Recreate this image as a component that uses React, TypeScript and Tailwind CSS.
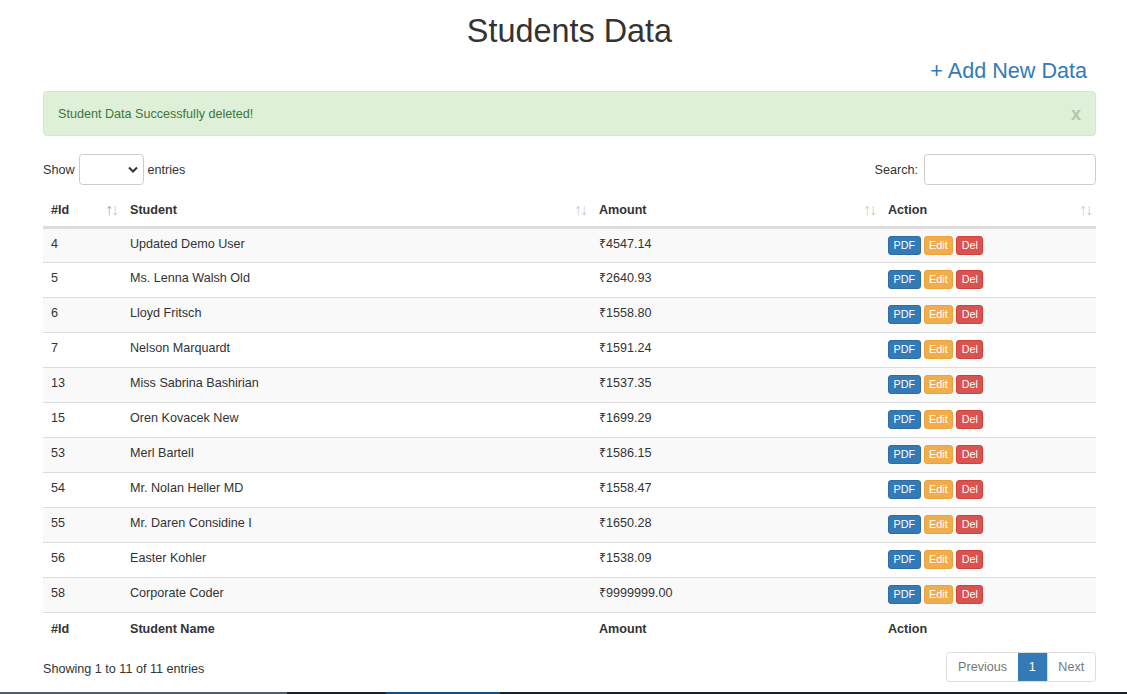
import React from 'react'

const students = [
  { id: 4, name: 'Updated Demo User', amount: '₹4547.14' },
  { id: 5, name: 'Ms. Lenna Walsh Old', amount: '₹2640.93' },
  { id: 6, name: 'Lloyd Fritsch', amount: '₹1558.80' },
  { id: 7, name: 'Nelson Marquardt', amount: '₹1591.24' },
  { id: 13, name: 'Miss Sabrina Bashirian', amount: '₹1537.35' },
  { id: 15, name: 'Oren Kovacek New', amount: '₹1699.29' },
  { id: 53, name: 'Merl Bartell', amount: '₹1586.15' },
  { id: 54, name: 'Mr. Nolan Heller MD', amount: '₹1558.47' },
  { id: 55, name: 'Mr. Daren Considine I', amount: '₹1650.28' },
  { id: 56, name: 'Easter Kohler', amount: '₹1538.09' },
  { id: 58, name: 'Corporate Coder', amount: '₹9999999.00' },
]

const SortArrows: React.FC<{ active?: boolean }> = ({ active }) => (
  <span className="flex text-[16px] leading-none font-normal tracking-[-2px]">
    <span className={active ? 'text-[#9ca3d8]' : 'text-[#cccccc]'}>↑</span>
    <span className="text-[#cccccc]">↓</span>
  </span>
)

const HeadCell: React.FC<{ label: string; active?: boolean }> = ({ label, active }) => (
  <th className="border-b-[3px] border-[#ddd] py-[7px] pl-2 pr-[5px] text-left font-bold">
    <div className="flex items-center justify-between">
      <span>{label}</span>
      <SortArrows active={active} />
    </div>
  </th>
)

const App: React.FC = () => {
  return (
    <div className="flex min-h-screen flex-col bg-white font-['Liberation_Sans',Arial,sans-serif] text-[12.6px] leading-[18px] text-[#333]">
      <div className="pr-[31px] pl-[43px]">
        <h1 className="mt-[14px] text-center text-[32.4px] leading-[1.1] font-normal">Students Data</h1>
        <div className="mt-[9px] flex justify-end pr-[9px]">
          <a href="#" className="text-[21.6px] leading-[1.1] text-[#337ab7]">+ Add New Data</a>
        </div>

        <div className="mt-[9px] flex items-center justify-between rounded-[3.6px] border border-[#d6e9c6] bg-[#dff0d8] py-[12.5px] pr-[14px] pl-[14px] text-[#3c763d]">
          <span>Student Data Successfully deleted!</span>
          <span className="text-[18px] leading-[18px] font-bold text-[#b5c6ae]">x</span>
        </div>

        <div className="mt-[18px] flex items-center justify-between">
          <div className="flex items-center gap-[4px]">
            <span>Show</span>
            <div className="flex h-[31px] w-[65px] items-center justify-end rounded-[3.6px] border border-[#ccc] pr-[5px]">
              <svg width="10" height="7" viewBox="0 0 10 7" fill="none">
                <polyline points="1,1.5 5,5.5 9,1.5" stroke="#333" strokeWidth="2" />
              </svg>
            </div>
            <span>entries</span>
          </div>
          <div className="flex items-center gap-[6px]">
            <span>Search:</span>
            <div className="h-[31px] w-[172px] rounded-[3.6px] border border-[#ccc]" />
          </div>
        </div>

        <table className="mt-[9px] w-full table-fixed border-collapse">
          <colgroup>
            <col className="w-[79px]" />
            <col className="w-[469px]" />
            <col className="w-[289px]" />
            <col className="w-[216px]" />
          </colgroup>
          <thead>
            <tr>
              <HeadCell label="#Id" active />
              <HeadCell label="Student" />
              <HeadCell label="Amount" />
              <HeadCell label="Action" />
            </tr>
          </thead>
          <tbody>
            {students.map((s, i) => (
              <tr key={s.id} className={i % 2 === 0 ? 'bg-[#f9f9f9]' : 'bg-white'}>
                <td className="h-[35px] border-t border-[#ddd] px-2 pt-[6px] align-top">{s.id}</td>
                <td className="border-t border-[#ddd] px-2 pt-[6px] align-top">{s.name}</td>
                <td className="border-t border-[#ddd] px-2 pt-[6px] align-top">{s.amount}</td>
                <td className="border-t border-[#ddd] px-2 pt-[7px] align-top">
                  <div className="flex gap-[3px]">
                    <button className="h-[19px] rounded-[3px] border border-[#2e6da4] bg-[#337ab7] px-[4.5px] text-[10.8px] leading-[17px] text-white">PDF</button>
                    <button className="h-[19px] rounded-[3px] border border-[#eea236] bg-[#f0ad4e] px-[4.5px] text-[10.8px] leading-[17px] text-white">Edit</button>
                    <button className="h-[19px] rounded-[3px] border border-[#d43f3a] bg-[#d9534f] px-[4.5px] text-[10.8px] leading-[17px] text-white">Del</button>
                  </div>
                </td>
              </tr>
            ))}
          </tbody>
          <tfoot>
            <tr>
              <th className="border-t border-[#ddd] px-2 py-[7px] text-left font-bold">#Id</th>
              <th className="border-t border-[#ddd] px-2 py-[7px] text-left font-bold">Student Name</th>
              <th className="border-t border-[#ddd] px-2 py-[7px] text-left font-bold">Amount</th>
              <th className="border-t border-[#ddd] px-2 py-[7px] text-left font-bold">Action</th>
            </tr>
          </tfoot>
        </table>

        <div className="mt-[7px] flex items-center justify-between">
          <span className="pt-[4px]">Showing 1 to 11 of 11 entries</span>
          <div className="flex h-[30px] overflow-hidden rounded-[3.6px] border border-[#ddd]">
            <span className="flex items-center px-[10.8px] text-[#777]">Previous</span>
            <span className="flex items-center bg-[#337ab7] px-[10.8px] text-white">1</span>
            <span className="flex items-center border-l border-[#ddd] px-[10.8px] text-[#777]">Next</span>
          </div>
        </div>
      </div>

      <div className="mt-auto flex h-[2px]">
        <div className="w-[287px] bg-[#4f5f6b]" />
        <div className="w-[99px] bg-[#14232d]" />
        <div className="w-[114px] bg-[#0b4f8c]" />
        <div className="flex-1 bg-[#14232d]" />
      </div>
    </div>
  )
}

export default App
